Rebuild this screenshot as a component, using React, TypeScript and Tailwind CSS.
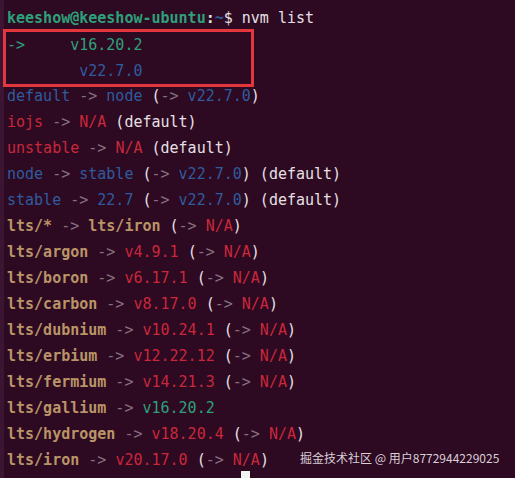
type Seg = [string, string, boolean?];

const G = 'text-[#2ea07a]';
const B = 'text-[#2f5c9e]';
const R = 'text-[#c9283a]';
const Y = 'text-[#b99467]';
const A = 'text-[#86707f]';
const W = 'text-[#e6e0e4]';

const na = (v: string, vc: string): Seg[] => [
  [' -> ', A],
  [v, vc],
  [' ', W],
  ['(', W],
  ['->', A],
  [' N/A', R],
  [')', W],
];

const lines: Seg[][] = [
  [['default', B], [' -> ', A], ['node', B], [' (', W], ['->', A], [' v22.7.0', B], [')', W]],
  [['iojs', R], [' -> ', A], ['N/A', R], [' (default)', W]],
  [['unstable', R], [' -> ', A], ['N/A', R], [' (default)', W]],
  [['node', B], [' -> ', A], ['stable', B], [' (', W], ['->', A], [' v22.7.0', B], [')', W], [' (default)', W]],
  [['stable', B], [' -> ', A], ['22.7', B], [' (', W], ['->', A], [' v22.7.0', B], [')', W], [' (default)', W]],
  [['lts/*', Y, true], [' -> ', A], ['lts/iron', Y, true], [' (', W], ['->', A], [' N/A', R], [')', W]],
  [['lts/argon', Y, true], ...na('v4.9.1', R)],
  [['lts/boron', Y, true], ...na('v6.17.1', R)],
  [['lts/carbon', Y, true], ...na('v8.17.0', R)],
  [['lts/dubnium', Y, true], ...na('v10.24.1', R)],
  [['lts/erbium', Y, true], ...na('v12.22.12', R)],
  [['lts/fermium', Y, true], ...na('v14.21.3', R)],
  [['lts/gallium', Y, true], [' -> ', A], ['v16.20.2', G]],
  [['lts/hydrogen', Y, true], ...na('v18.20.4', R)],
  [['lts/iron', Y, true], ...na('v20.17.0', R)],
];

function Line({ segs }: { segs: Seg[] }) {
  return (
    <div className="h-[26px] leading-[26px] whitespace-pre">
      {segs.map(([t, c, b], i) => (
        <span key={i} className={`${c} ${b ? 'font-bold' : ''}`}>
          {t}
        </span>
      ))}
    </div>
  );
}

export default function App() {
  return (
    <div className="relative w-[515px] h-[478px] overflow-hidden bg-[#2d0922] flex">
      <div className="w-[4px] shrink-0 bg-[#3b1531]" />
      <div className="pl-[3px] pt-[5px] text-[15px] font-['DejaVu_Sans_Mono',monospace]">
        <Line
          segs={[
            ['keeshow@keeshow-ubuntu', G, true],
            [':', W, true],
            ['~', B, true],
            ['$ nvm list', W],
          ]}
        />
        <div className="-ml-[4px] -mt-[2px] -mb-[4px] w-[251px] border-[3px] border-[#e3373d] pl-[1px]">
          <Line segs={[['->', G], ['     v16.20.2', G]]} />
          <Line segs={[['        v22.7.0', B]]} />
        </div>
        {lines.map((l, i) => (
          <Line key={i} segs={l} />
        ))}
        <div className="h-[26px]">
          <div className="ml-[234px] -mt-[2px] w-[9px] h-[18px] bg-[#f2f2f2]" />
        </div>
      </div>
      <div className="absolute left-[300px] top-[449px] text-[12px] leading-[18px] text-[#d9cfd6] font-['Noto_Sans_CJK_SC','Noto_Sans',sans-serif] whitespace-nowrap">
        掘金技术社区 @ 用户8772944229025
      </div>
    </div>
  );
}
